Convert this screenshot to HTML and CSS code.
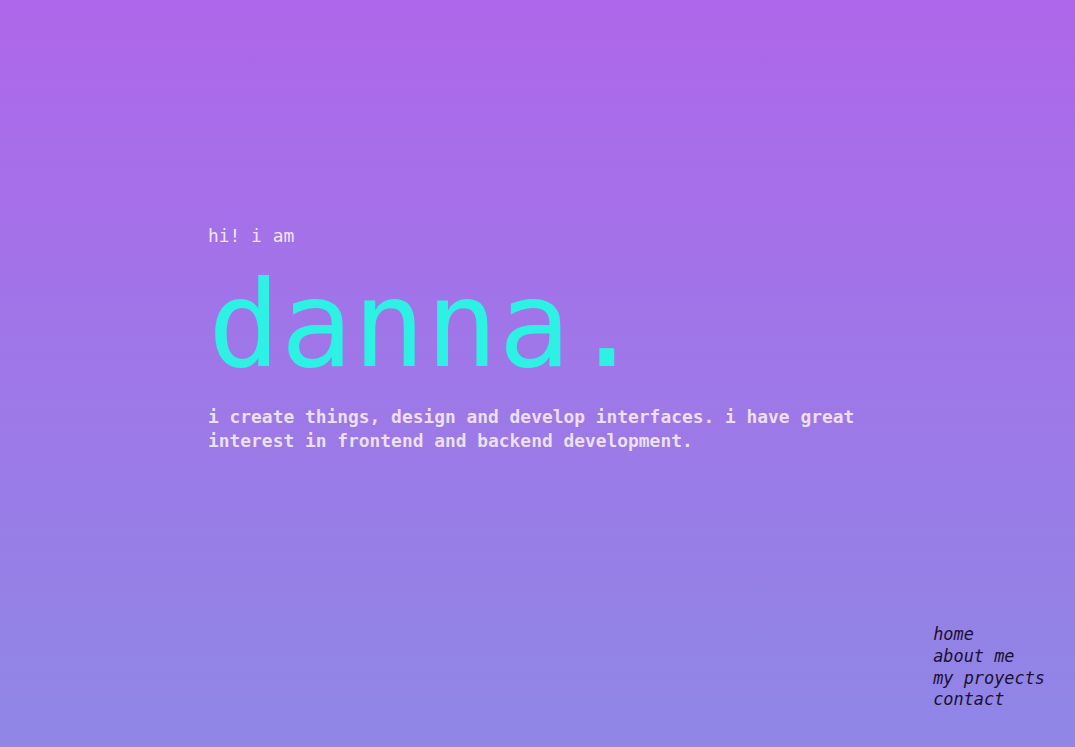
FILE: index.html
```html
<!DOCTYPE html>
<html lang="en">
<head>
<meta charset="utf-8">
<title>danna.</title>
<link rel="stylesheet" href="styles.css">
</head>
<body>
<div class="page">
  <main class="hero">
    <p class="greeting">hi! i am</p>
    <h1 class="name">danna.</h1>
    <p class="intro">i create things, design and develop interfaces. i have great<br>interest in frontend and backend development.</p>
  </main>
  <nav class="nav">
    <a href="#" class="nav-link">home</a>
    <a href="#" class="nav-link">about me</a>
    <a href="#" class="nav-link">my proyects</a>
    <a href="#" class="nav-link">contact</a>
  </nav>
</div>
</body>
</html>
```
FILE: styles.css
```css
html, body {
  margin: 0;
  padding: 0;
  height: 100%;
}

body {
  background: linear-gradient(to bottom, #ae67ea 0%, #8f87e6 100%);
  font-family: "DejaVu Sans Mono", "Liberation Mono", monospace;
}

.page {
  display: flex;
  flex-direction: column;
  height: 100vh;
  box-sizing: border-box;
}

.hero {
  padding: 224px 0 0 208px;
}

.greeting {
  margin: 0;
  font-size: 17.9px;
  line-height: 24px;
  color: #efe4fb;
}

.name {
  margin: 17px 0 0 0;
  font-size: 120px;
  line-height: 120px;
  font-weight: normal;
  color: #2df2e3;
  letter-spacing: 0.3px;
}

.intro {
  margin: 20px 0 0 0;
  font-size: 17.9px;
  line-height: 24px;
  font-weight: bold;
  color: #ecdff8;
}

.nav {
  margin-top: auto;
  align-self: flex-end;
  display: flex;
  flex-direction: column;
  padding: 0 30px 36px 0;
}

.nav-link {
  font-size: 16.9px;
  line-height: 21.7px;
  font-style: italic;
  color: #1a1033;
  text-decoration: none;
}
```
